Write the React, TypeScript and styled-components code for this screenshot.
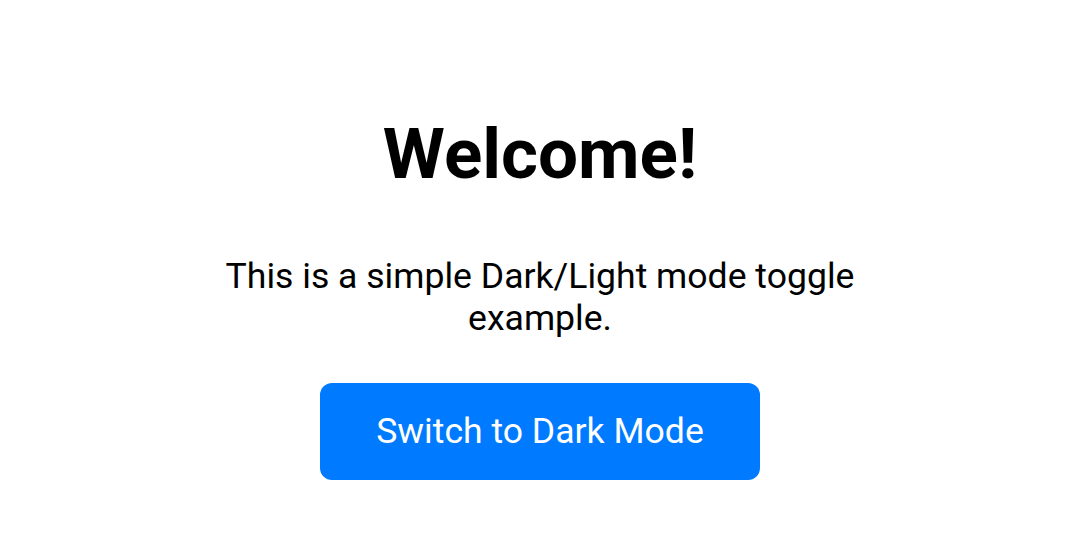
import React, { useState } from "react";
import styled, { createGlobalStyle } from "styled-components";

const GlobalStyle = createGlobalStyle`
  html, body {
    margin: 0;
    padding: 0;
    background: #ffffff;
    font-family: Roboto, "Liberation Sans", sans-serif;
  }
`;

const Page = styled.main<{ $dark: boolean }>`
  min-height: 542px;
  box-sizing: border-box;
  display: flex;
  flex-direction: column;
  align-items: center;
  padding-top: 118px;
  background: ${(p) => (p.$dark ? "#121212" : "#ffffff")};
  color: ${(p) => (p.$dark ? "#ffffff" : "#000000")};
`;

const Title = styled.h1`
  margin: 0;
  font-size: 71px;
  line-height: 71px;
  font-weight: 700;
`;

const Text = styled.p`
  margin: 66px 0 0;
  max-width: 680px;
  text-align: center;
  font-size: 35.6px;
  line-height: 42px;
  font-weight: 400;
`;

const ToggleButton = styled.button`
  margin-top: 44px;
  padding: 27px 56px 28px;
  border: none;
  border-radius: 12px;
  background: #007bff;
  color: #ffffff;
  font-family: Roboto, "Liberation Sans", sans-serif;
  font-size: 35.6px;
  line-height: 42px;
  cursor: pointer;
`;

export default function App() {
  const [dark, setDark] = useState(false);
  return (
    <>
      <GlobalStyle />
      <Page $dark={dark}>
        <Title>Welcome!</Title>
        <Text>This is a simple Dark/Light mode toggle example.</Text>
        <ToggleButton onClick={() => setDark(!dark)}>
          {dark ? "Switch to Light Mode" : "Switch to Dark Mode"}
        </ToggleButton>
      </Page>
    </>
  );
}
